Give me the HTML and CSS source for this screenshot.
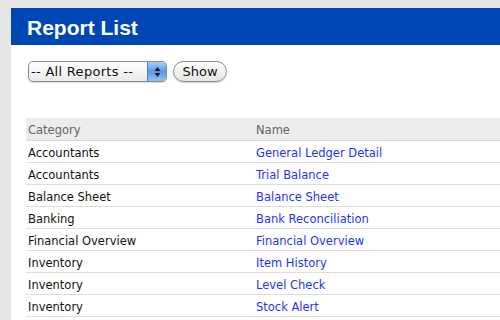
FILE: index.html
```html
<!DOCTYPE html>
<html lang="en">
<head>
    <meta charset="UTF-8">
    <title>Report List</title>
    <link rel="stylesheet" href="styles.css">
</head>
<body>
    <div class="page">
        <h1 class="title-bar">Report List</h1>

        <form class="filter">
            <div class="select">
                <span class="select-label">-- All Reports --</span>
                <span class="select-arrows">
                    <svg width="7" height="12" viewBox="0 0 7 12">
                        <path d="M3.5 1 L6.5 5 L0.5 5 Z" fill="#1a1a2e"/>
                        <path d="M3.5 11 L6.5 7 L0.5 7 Z" fill="#1a1a2e"/>
                    </svg>
                </span>
            </div>
            <button type="button" class="show-btn">Show</button>
        </form>

        <table class="reports">
            <thead>
                <tr><th class="col-cat">Category</th><th>Name</th></tr>
            </thead>
            <tbody>
                <tr><td>Accountants</td><td><a href="#">General Ledger Detail</a></td></tr>
                <tr><td>Accountants</td><td><a href="#">Trial Balance</a></td></tr>
                <tr><td>Balance Sheet</td><td><a href="#">Balance Sheet</a></td></tr>
                <tr><td>Banking</td><td><a href="#">Bank Reconciliation</a></td></tr>
                <tr><td>Financial Overview</td><td><a href="#">Financial Overview</a></td></tr>
                <tr><td>Inventory</td><td><a href="#">Item History</a></td></tr>
                <tr><td>Inventory</td><td><a href="#">Level Check</a></td></tr>
                <tr><td>Inventory</td><td><a href="#">Stock Alert</a></td></tr>
            </tbody>
        </table>
    </div>
</body>
</html>
```

FILE: styles.css
```css
* {
    margin: 0;
    padding: 0;
    box-sizing: border-box;
}

html, body {
    height: 100%;
    overflow: hidden;
}

body {
    font-family: "DejaVu Sans", Verdana, sans-serif;
    font-size: 11.5px;
    background-color: #e6e6e6;
    padding: 8px 0 0 11px;
}

.page {
    background: white;
    height: 100%;
}

.title-bar {
    background-color: #0047b6;
    color: white;
    font-family: "Liberation Sans", Arial, sans-serif;
    font-size: 21px;
    font-weight: bold;
    height: 37px;
    line-height: 39px;
    padding-left: 16px;
}

.filter {
    display: flex;
    align-items: center;
    gap: 6px;
    padding: 16px 0 0 17px;
}

.select {
    display: flex;
    width: 139px;
    height: 21px;
    border: 1px solid #8a8a8a;
    border-radius: 5px;
    background: linear-gradient(#ffffff, #e9e9e9);
    overflow: hidden;
    box-shadow: 0 1px 1px rgba(0,0,0,0.15);
}

.select-label {
    flex: 1;
    font-size: 13px;
    letter-spacing: 0.3px;
    line-height: 19px;
    padding-left: 2px;
    color: #111;
    white-space: nowrap;
}

.select-arrows {
    width: 19px;
    flex: none;
    display: flex;
    align-items: center;
    justify-content: center;
    background: linear-gradient(#a9cdf5, #5b9be6 50%, #8fc0f3);
    border-left: 1px solid #5a7fb8;
}

.show-btn {
    font-family: inherit;
    font-size: 13px;
    width: 54px;
    height: 21px;
    border: 1px solid #8a8a8a;
    border-radius: 11px;
    background: linear-gradient(#ffffff, #e4e4e4);
    color: #111;
    box-shadow: 0 1px 1px rgba(0,0,0,0.15);
}

.reports {
    border-collapse: collapse;
    margin: 36px 0 0 15px;
    width: 474px;
}

.reports th {
    background-color: #ececec;
    color: #666;
    font-weight: normal;
    text-align: left;
    height: 22px;
    padding: 3px 0 0 2px;
    border-bottom: 1px solid #d6d6d6;
}

.reports .col-cat {
    width: 228px;
}

.reports td {
    height: 22px;
    padding: 3px 0 0 2px;
    border-bottom: 1px solid #dedede;
    color: #111;
}

.reports a {
    color: #1a35ff;
    text-decoration: none;
}
```
